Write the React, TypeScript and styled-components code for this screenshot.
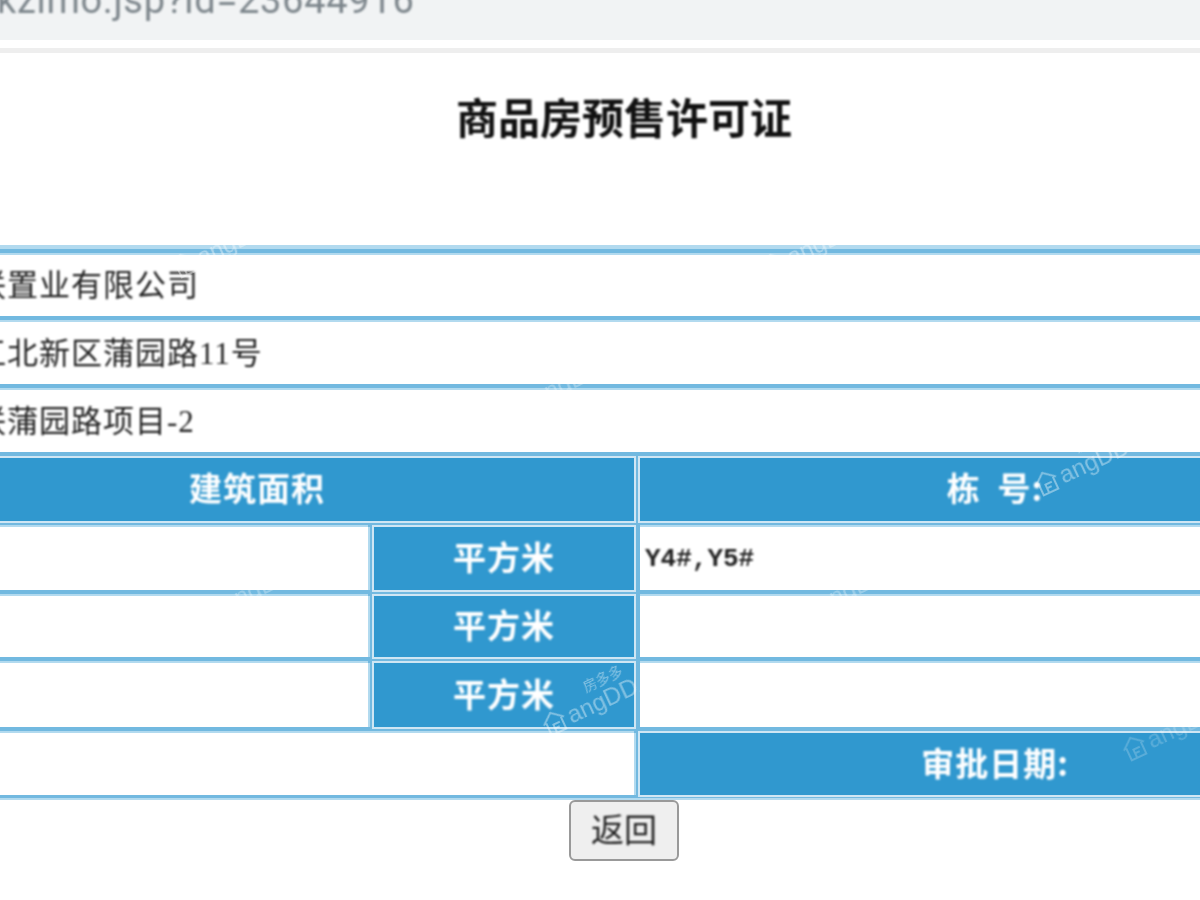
import styled, { createGlobalStyle } from "styled-components";

const GlobalStyle = createGlobalStyle`
  html, body {
    margin: 0;
    width: 1200px;
    height: 900px;
    overflow: hidden;
    background: #fff;
  }
`;

const CJK = `"Noto Sans CJK SC", "Liberation Sans", sans-serif`;
const PALE = "#b2daef";

const Page = styled.div`
  width: 1200px;
  height: 900px;
  overflow: hidden;
  position: relative;
`;

const AddressBar = styled.div`
  height: 40px;
  background: #f1f3f4;
  display: flex;
  align-items: flex-end;
`;

const Url = styled.span`
  font: 38px/1 Roboto, "Liberation Sans", sans-serif;
  color: #7d868c;
  white-space: nowrap;
  margin-left: -3px;
  padding-bottom: 21px;
  letter-spacing: 0.7px;
  filter: blur(1px);
`;

const BarEdge = styled.div`
  height: 5px;
  margin-top: 8px;
  background: #eeeeee;
`;

const TitleBlock = styled.div`
  height: 192px;
  box-sizing: border-box;
  padding: 33px 0 0 48px;
  text-align: center;
`;

const Title = styled.h1`
  margin: 0;
  font: 700 42px/60px ${CJK};
  color: #111;
  filter: blur(0.8px);
`;

const Table = styled.div`
  width: 1470px;
  margin-left: -120px;
  box-sizing: border-box;
  padding: 6px 0 3px;
  border-top: 4px solid ${PALE};
  border-bottom: 2px solid ${PALE};
  display: grid;
  grid-template-columns: 488px 260px 710px;
  grid-template-rows: 61px 62px 62px 63px 63px 61px 64px 62px;
  gap: 6px;
  background: #72b9e0;
`;

const Cell = styled.div<{ $span?: number }>`
  grid-column: span ${(p) => p.$span ?? 1};
  background: #fff;
  box-shadow: 0 -2px 0 ${PALE}, 2px 0 0 ${PALE};
  display: flex;
  align-items: center;
  min-width: 0;
`;

const ValueCell = styled(Cell)`
  padding-left: 95px;
  font: 400 31px/1 "Liberation Serif", "Noto Sans CJK SC", serif;
  letter-spacing: 1px;
  color: #222;
  white-space: nowrap;
  & > span {
    filter: blur(0.9px);
  }
`;

const CodeCell = styled(Cell)`
  padding-left: 5px;
  font: 700 26px/1 "Liberation Mono", monospace;
  color: #222;
  & > span {
    filter: blur(0.9px);
  }
`;

const HeadCell = styled(Cell)`
  background: #3098cf;
  box-shadow: 0 0 0 2px #cfe6f4;
  justify-content: center;
  padding-bottom: 4px;
  font: 700 33px/1 ${CJK};
  letter-spacing: 1px;
  color: #fff;
  & > span {
    filter: blur(0.9px);
    white-space: pre;
  }
`;

const ButtonRow = styled.div`
  display: flex;
  justify-content: center;
  padding-left: 48px;
`;

const BackButton = styled.button`
  width: 110px;
  height: 61px;
  padding: 0 0 4px;
  background: #efefef;
  border: 2px solid #999;
  border-radius: 6px;
  font: 400 33px/1 ${CJK};
  color: #222;
  & > span {
    display: block;
    filter: blur(0.9px);
  }
`;

const Watermark = styled.div<{ $x: number; $y: number; $alpha: number }>`
  position: absolute;
  left: ${(p) => p.$x}px;
  top: ${(p) => p.$y}px;
  width: 130px;
  transform: rotate(-25deg);
  transform-origin: 50px 50%;
  color: #fff;
  opacity: ${(p) => p.$alpha};
  display: flex;
  align-items: flex-end;
  gap: 2px;
  pointer-events: none;
  filter: blur(0.4px);
  & > svg {
    flex: none;
  }
`;

const MarkBrand = styled.div`
  font: 400 24px/1 "Liberation Sans", sans-serif;
  white-space: nowrap;
  & > small {
    font-size: 10px;
  }
`;

const MarkCn = styled.div`
  font: 400 14px/1 ${CJK};
  margin: 0 0 2px 26px;
`;

const HouseIcon = () => (
  <svg width="26" height="26" viewBox="0 0 26 26" fill="none" stroke="currentColor" strokeWidth="2">
    <path d="M2 12 13 3l11 9M5 11v13h16V11M11 24v-9h7M11 19h5" />
  </svg>
);

const Mark = (props: { x: number; y: number; alpha: number }) => (
  <Watermark $x={props.x} $y={props.y} $alpha={props.alpha}>
    <HouseIcon />
    <div>
      <MarkCn>房多多</MarkCn>
      <MarkBrand>
        angDD<small>.com</small>
      </MarkBrand>
    </div>
  </Watermark>
);

export default function App() {
  return (
    <Page>
      <GlobalStyle />
      <AddressBar>
        <Url>kzimo.jsp?id=23644916</Url>
      </AddressBar>
      <BarEdge />
      <TitleBlock>
        <Title>商品房预售许可证</Title>
      </TitleBlock>
      <Table>
        <ValueCell $span={3}><span>联置业有限公司</span></ValueCell>
        <ValueCell $span={3}><span>江北新区蒲园路11号</span></ValueCell>
        <ValueCell $span={3}><span>联蒲园路项目-2</span></ValueCell>
        <HeadCell $span={2}><span>建筑面积</span></HeadCell>
        <HeadCell><span>栋  号:</span></HeadCell>
        <Cell />
        <HeadCell><span>平方米</span></HeadCell>
        <CodeCell><span>Y4#,Y5#</span></CodeCell>
        <Cell />
        <HeadCell><span>平方米</span></HeadCell>
        <Cell />
        <Cell />
        <HeadCell><span>平方米</span></HeadCell>
        <Cell />
        <Cell $span={2} />
        <HeadCell><span>审批日期:</span></HeadCell>
      </Table>
      <ButtonRow>
        <BackButton type="button"><span>返回</span></BackButton>
      </ButtonRow>
      <Mark x={535} y={680} alpha={0.4} />
      <Mark x={1027} y={440} alpha={0.4} />
      <Mark x={1115} y={705} alpha={0.2} />
      <Mark x={165} y={222} alpha={0.4} />
      <Mark x={755} y={222} alpha={0.4} />
      <Mark x={500} y={362} alpha={0.3} />
      <Mark x={190} y={568} alpha={0.3} />
      <Mark x={785} y={568} alpha={0.3} />
    </Page>
  );
}
